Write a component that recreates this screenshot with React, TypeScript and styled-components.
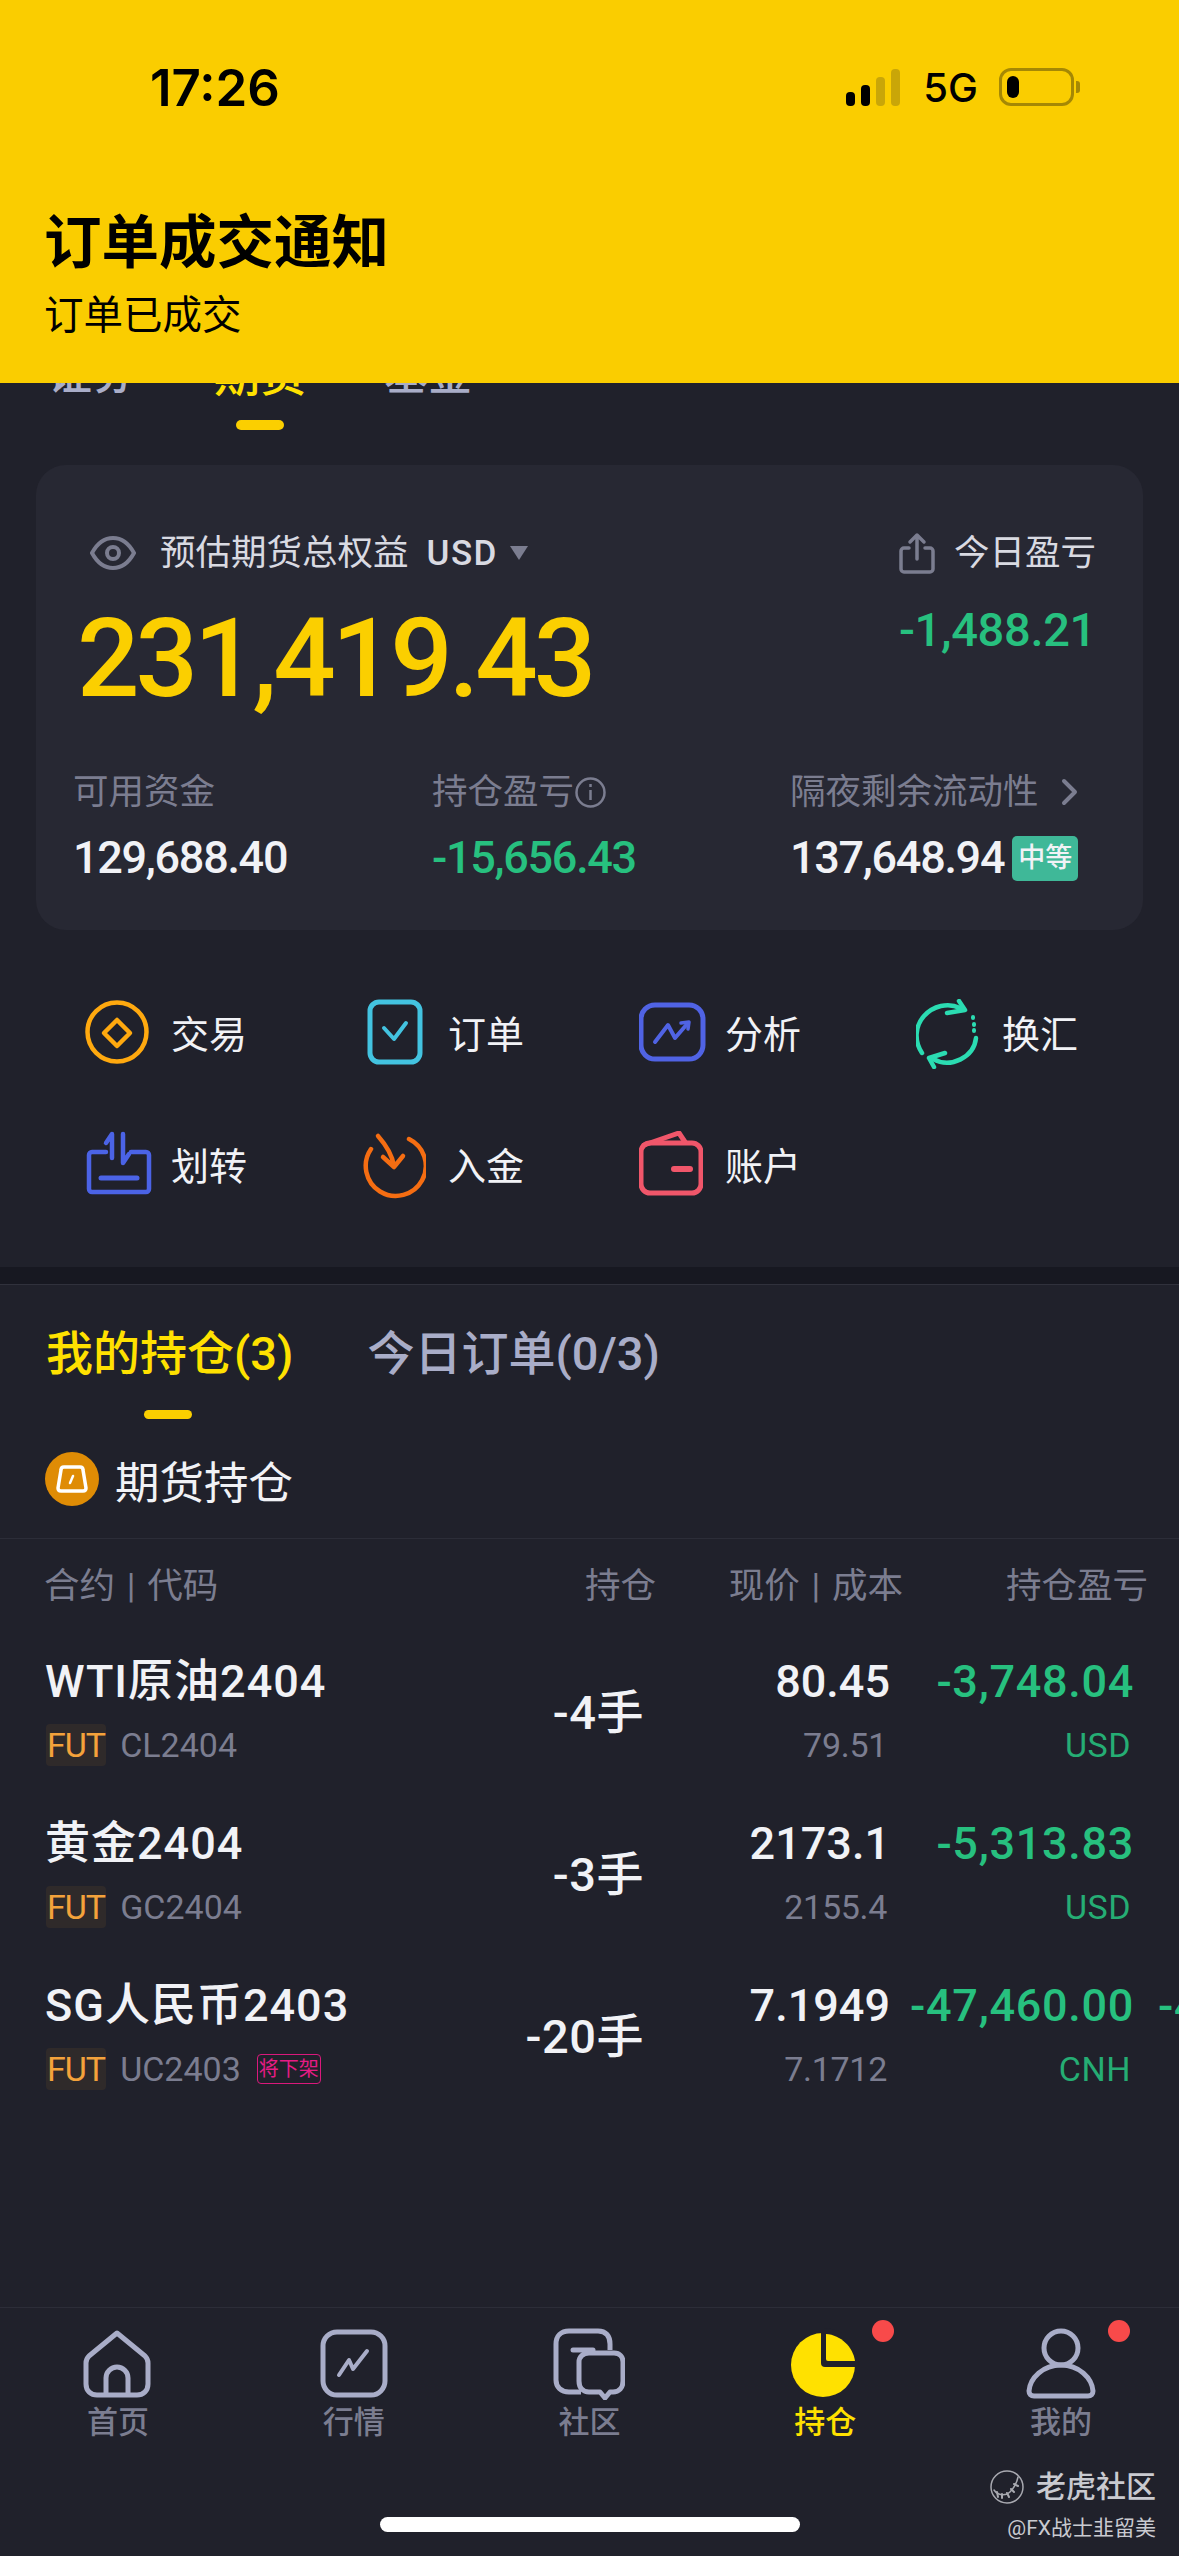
import React from "react";
import styled, { createGlobalStyle } from "styled-components";

const GREEN = "#27c07f";
const GREY = "#7b7d90";
const LILAC = "#a9adc8";
const WHITE = "#f1f2f6";

const GlobalStyle = createGlobalStyle`
  html, body {
    margin: 0;
    padding: 0;
    background: #20212b;
    font-family: Roboto, "Noto Sans CJK SC", sans-serif;
  }
`;

const holdings = [
	{ name: "WTI原油2404", code: "CL2404", qty: "-4手", price: "80.45", cost: "79.51", pnl: "-3,748.04", ccy: "USD" },
	{ name: "黄金2404", code: "GC2404", qty: "-3手", price: "2173.1", cost: "2155.4", pnl: "-5,313.83", ccy: "USD" },
	{ name: "SG人民币2403", code: "UC2403", qty: "-20手", price: "7.1949", cost: "7.1712", pnl: "-47,460.00", ccy: "CNH", delisting: true, more: "-4" },
];

const Eye = () => (
	<svg width="46" height="36" viewBox="0 0 46 36" fill="none" stroke={GREY} strokeWidth="4">
		<path d="M2 18C8 7 15 3 23 3s15 4 21 15c-6 11-13 15-21 15S8 29 2 18Z" />
		<circle cx="23" cy="18" r="6" />
	</svg>
);

const Share = () => (
	<svg width="36" height="42" viewBox="0 0 36 42" fill="none" stroke={GREY} strokeWidth="3.5" strokeLinecap="round" strokeLinejoin="round">
		<path d="M10 16H5a3 3 0 0 0-3 3v18a3 3 0 0 0 3 3h26a3 3 0 0 0 3-3V19a3 3 0 0 0-3-3h-5" />
		<path d="M18 27V3M11 10l7-7 7 7" />
	</svg>
);

const Info = () => (
	<svg width="33" height="33" viewBox="0 0 33 33" fill="none" stroke={GREY} strokeWidth="2.5">
		<circle cx="16.5" cy="16.5" r="14" />
		<path d="M16.5 14v10M16.5 8v3" />
	</svg>
);

const Chevron = () => (
	<svg width="20" height="30" viewBox="0 0 20 30" fill="none" stroke={GREY} strokeWidth="4" strokeLinecap="round" strokeLinejoin="round">
		<path d="M4 4l11 11L4 26" />
	</svg>
);

const TradeIcon = () => (
	<svg width="64" height="70" viewBox="0 0 64 70" fill="none" stroke="#ffa90f" strokeWidth="4.5" strokeLinejoin="round">
		<circle cx="32" cy="33" r="29.5" />
		<path d="M32 21l13 13-13 13-13-13Z" />
	</svg>
);

const OrderIcon = () => (
	<svg width="64" height="70" viewBox="0 0 64 70" fill="none" stroke="#43c3e0" strokeWidth="5" strokeLinecap="round" strokeLinejoin="round">
		<rect x="8" y="3" width="50" height="60" rx="9" />
		<path d="M22 29l10 11 12-16" strokeWidth="4" />
	</svg>
);

const AnalysisIcon = () => (
	<svg width="67" height="70" viewBox="0 0 67 70" fill="none" stroke="#5063e4" strokeWidth="5" strokeLinecap="round" strokeLinejoin="round">
		<rect x="2" y="6" width="62" height="54" rx="14" />
		<path d="M16 43l13-17 7 13 13-15" strokeWidth="4" />
		<path d="M42 24l8-1-1 7" strokeWidth="3.5" />
	</svg>
);

const ExchangeIcon = () => (
	<svg width="64" height="70" viewBox="0 0 64 70" fill="none" stroke="#2bdcb2" strokeWidth="4.5" strokeLinecap="round" strokeLinejoin="round">
		<path d="M6 54C-2 42-1 27 8 17 17 7 32 3 44 9" />
		<path d="M43 2l6 9-18 3" />
		<path d="M60 39C58 58 35 70 17 60" />
		<path d="M29 54L13 59l5 9" />
		<path d="M57 18v1M58 25v1M58 31v1" strokeWidth="4" />
	</svg>
);

const TransferIcon = () => (
	<svg width="67" height="70" viewBox="0 0 67 70" fill="none" stroke="#4b63e6" strokeWidth="4.5" strokeLinecap="round" strokeLinejoin="round">
		<path d="M21 21H7a3 3 0 0 0-3 3v34a3 3 0 0 0 3 3h54a3 3 0 0 0 3-3V24a3 3 0 0 0-3-3H46" />
		<path d="M16 47h36" strokeWidth="5" />
		<path d="M27 27V3l-6 9M38 3v29l6-9" />
	</svg>
);

const DepositIcon = () => (
	<svg width="64" height="70" viewBox="0 0 64 70" fill="none" stroke="#f56d12" strokeWidth="4.5" strokeLinecap="round" strokeLinejoin="round">
		<path d="M47 8A30 30 0 1 1 9 18" />
		<path d="M16 5c8 9 14 18 16 30M21 26l11 10 9-11" />
	</svg>
);

const WalletIcon = () => (
	<svg width="64" height="70" viewBox="0 0 64 70" fill="none" stroke="#f0566a" strokeWidth="5" strokeLinecap="round" strokeLinejoin="round">
		<rect x="2" y="12" width="60" height="50" rx="9" />
		<path d="M5 14L40 2l6 9" />
		<path d="M35 38h16" strokeWidth="6" />
	</svg>
);

const HomeIcon = () => (
	<svg width="70" height="72" viewBox="0 0 70 72" fill="none" stroke={LILAC} strokeWidth="5" strokeLinejoin="round">
		<path d="M34 5L6 28c-2 2-3 4-3 7v21c0 7 5 11 11 11h40c6 0 11-4 11-11V35c0-3-1-5-3-7Z" />
		<path d="M23 67V50c0-6 5-11 11-11s11 5 11 11v17" />
	</svg>
);

const MarketIcon = () => (
	<svg width="70" height="72" viewBox="0 0 70 72" fill="none" stroke={LILAC} strokeWidth="5" strokeLinecap="round" strokeLinejoin="round">
		<rect x="4" y="4" width="62" height="63" rx="14" />
		<path d="M20 47l10-15 4 9 14-18" strokeWidth="4" />
	</svg>
);

const CommunityIcon = () => (
	<svg width="72" height="72" viewBox="0 0 72 72" fill="none" stroke={LILAC} strokeWidth="5" strokeLinejoin="round">
		<path d="M28 64H16C8 64 3 59 3 52V16C3 8 8 3 16 3h29c8 0 12 5 12 13v6" />
		<path d="M20 22h20" strokeLinecap="round" />
		<path d="M36 25h25c6 0 9 4 9 9v19c0 7-4 11-10 11h-3l-5 6-5-6H36c-6 0-10-4-10-11V34c0-5 4-9 10-9Z" />
	</svg>
);

const PieIcon = () => (
	<svg width="70" height="72" viewBox="0 0 70 72" fill="none">
		<circle cx="33" cy="37" r="32" fill="#ffe100" />
		<path d="M31 0h3c19 0 35 16 35 39H35a4 4 0 0 1-4-4Z" fill="#20212b" />
		<path d="M36 6c15 1 27 13 29 27H38a2 2 0 0 1-2-2Z" fill="#ffe100" />
	</svg>
);

const MeIcon = () => (
	<svg width="70" height="72" viewBox="0 0 70 72" fill="none" stroke={LILAC} strokeWidth="5" strokeLinejoin="round">
		<circle cx="35" cy="20" r="17" />
		<path d="M35 37C17 37 4 50 3 63c0 3 2 5 5 5h54c3 0 5-2 5-5-1-13-14-26-32-26Z" />
	</svg>
);

const TigerIcon = () => (
	<svg width="36" height="34" viewBox="0 0 36 34" fill="none" stroke="#a8a9b0" strokeWidth="1.5" strokeLinecap="round">
		<circle cx="18" cy="17" r="16" />
		<path d="M5 20c4 6 12 6 16 2 4-4 7-10 8-15" />
		<path d="M8 22l1 5M13 24l0 4M18 23l2 4M22 19l3 3M25 14l4 2" strokeWidth="2" />
	</svg>
);

const actions = [
	{ label: "交易", icon: <TradeIcon /> },
	{ label: "订单", icon: <OrderIcon /> },
	{ label: "分析", icon: <AnalysisIcon /> },
	{ label: "换汇", icon: <ExchangeIcon /> },
	{ label: "划转", icon: <TransferIcon /> },
	{ label: "入金", icon: <DepositIcon /> },
	{ label: "账户", icon: <WalletIcon /> },
];

const navItems = [
	{ label: "首页", icon: <HomeIcon /> },
	{ label: "行情", icon: <MarketIcon /> },
	{ label: "社区", icon: <CommunityIcon /> },
	{ label: "持仓", icon: <PieIcon />, active: true, dot: true },
	{ label: "我的", icon: <MeIcon />, dot: true },
];

export default function App() {
	return (
		<>
			<GlobalStyle />
			<Page>
				<Banner>
					<StatusBar>
						<Time>17:26</Time>
						<StatusRight>
							<Signal>
								<Bar $h={14} />
								<Bar $h={21} />
								<Bar $h={29} $dim />
								<Bar $h={37} $dim />
							</Signal>
							<Network>5G</Network>
							<Battery>
								<BatteryLevel />
							</Battery>
							<BatteryCap />
						</StatusRight>
					</StatusBar>
					<BannerTitle>订单成交通知</BannerTitle>
					<BannerText>订单已成交</BannerText>
				</Banner>

				<AssetTabs>
					<AssetTab>证券</AssetTab>
					<AssetTab $active>
						期货
						<Indicator />
					</AssetTab>
					<AssetTab>基金</AssetTab>
				</AssetTabs>

				<Card>
					<CardHead>
						<HeadLeft>
							<Eye />
							<HeadLabel>预估期货总权益</HeadLabel>
							<HeadCcy>USD</HeadCcy>
							<Caret />
						</HeadLeft>
						<HeadRight>
							<Share />
							<HeadLabel>今日盈亏</HeadLabel>
						</HeadRight>
					</CardHead>
					<TotalRow>
						<Total>231,419.43</Total>
						<TodayPnl>-1,488.21</TodayPnl>
					</TotalRow>
					<Stats>
						<div>
							<StatLabel>可用资金</StatLabel>
							<StatValue>129,688.40</StatValue>
						</div>
						<div>
							<StatLabel>
								持仓盈亏
								<Info />
							</StatLabel>
							<StatValue $green>-15,656.43</StatValue>
						</div>
						<div>
							<StatLabel>
								隔夜剩余流动性
								<ChevronWrap>
									<Chevron />
								</ChevronWrap>
							</StatLabel>
							<StatValue>
								137,648.94
								<Level>中等</Level>
							</StatValue>
						</div>
					</Stats>
				</Card>

				<Actions>
					{actions.map((a) => (
						<Action key={a.label}>
							<ActionIcon>{a.icon}</ActionIcon>
							<ActionLabel>{a.label}</ActionLabel>
						</Action>
					))}
				</Actions>

				<Band />

				<SectionTabs>
					<SectionTab $active>
						我的持仓(3)
						<SectionIndicator />
					</SectionTab>
					<SectionTab>今日订单(0/3)</SectionTab>
				</SectionTabs>

				<GroupRow>
					<GroupBadge>
						<svg width="34" height="30" viewBox="0 0 34 30" fill="none" stroke="#fff" strokeWidth="3.5" strokeLinejoin="round">
							<path d="M9 3h16c2 0 3 1 3 3l3 18c0 2-1 3-3 3H6c-2 0-3-1-3-3L6 6c0-2 1-3 3-3Z" />
							<path d="M18 12l-3 7" strokeLinecap="round" strokeWidth="2.5" />
						</svg>
					</GroupBadge>
					<GroupTitle>期货持仓</GroupTitle>
				</GroupRow>

				<TableHead>
					<span>合约 | 代码</span>
					<HeadCell>持仓</HeadCell>
					<HeadCell>现价 | 成本</HeadCell>
					<HeadCell>持仓盈亏</HeadCell>
				</TableHead>

				{holdings.map((h) => (
					<Row key={h.code}>
						<Cell>
							<Name>{h.name}</Name>
							<Sub>
								<FutTag>FUT</FutTag>
								<Code>{h.code}</Code>
								{h.delisting && <Delist>将下架</Delist>}
							</Sub>
						</Cell>
						<Qty>{h.qty}</Qty>
						<Cell $right>
							<Price>{h.price}</Price>
							<Sub>
								<Cost>{h.cost}</Cost>
							</Sub>
						</Cell>
						<Cell $right>
							<Pnl>{h.pnl}</Pnl>
							<Sub>
								<Ccy>{h.ccy}</Ccy>
							</Sub>
						</Cell>
						{h.more && (
							<Cell>
								<Pnl>{h.more}</Pnl>
							</Cell>
						)}
					</Row>
				))}

				<Nav>
					{navItems.map((n) => (
						<NavItem key={n.label} $active={n.active}>
							<NavIcon>
								{n.icon}
								{n.dot && <Dot />}
							</NavIcon>
							{n.label}
						</NavItem>
					))}
				</Nav>

				<Watermark>
					<Brand>
						<TigerIcon />
						老虎社区
					</Brand>
					<Author>@FX战士韭留美</Author>
				</Watermark>
				<HomeBar />
			</Page>
		</>
	);
}

const Page = styled.div`
  position: relative;
  display: flex;
  flex-direction: column;
  width: 1179px;
  height: 2556px;
  overflow: hidden;
  background: #20212b;
  color: ${WHITE};
`;

const Banner = styled.div`
  position: absolute;
  top: 0;
  left: 0;
  right: 0;
  z-index: 2;
  box-sizing: border-box;
  height: 383px;
  padding: 0 44px;
  background: #facd00;
  color: #000;
`;

const StatusBar = styled.div`
  display: flex;
  justify-content: space-between;
  align-items: center;
  height: 70px;
  padding: 52px 0 0 106px;
`;

const Time = styled.span`
  font-family: Inter, sans-serif;
  font-weight: 600;
  font-size: 51px;
`;

const StatusRight = styled.div`
  display: flex;
  align-items: center;
  margin-right: 55px;
`;

const Signal = styled.div`
  display: flex;
  align-items: flex-end;
  gap: 6px;
  height: 37px;
  margin-right: 23px;
`;

const Bar = styled.i<{ $h: number; $dim?: boolean }>`
  width: 9px;
  height: ${(p) => p.$h}px;
  border-radius: 4px;
  background: ${(p) => (p.$dim ? "#c9a608" : "#000")};
`;

const Network = styled.span`
  font-family: Inter, sans-serif;
  font-weight: 500;
  font-size: 40px;
  margin-right: 21px;
`;

const Battery = styled.div`
  box-sizing: border-box;
  width: 75px;
  height: 38px;
  padding: 5px;
  border: 3px solid #a58804;
  border-radius: 12px;
`;

const BatteryLevel = styled.div`
  width: 12px;
  height: 100%;
  border-radius: 6px;
  background: #000;
`;

const BatteryCap = styled.i`
  width: 4px;
  height: 12px;
  margin-left: 2px;
  border-radius: 0 3px 3px 0;
  background: #a58804;
`;

const BannerTitle = styled.div`
  margin-top: 82px;
  font-size: 57.5px;
  line-height: 80px;
  font-weight: 700;
`;

const BannerText = styled.div`
  margin-top: 7px;
  font-size: 39.5px;
  line-height: 50px;
`;

const AssetTabs = styled.div`
  display: flex;
  height: 430px;
  box-sizing: border-box;
  padding: 345px 0 0 48px;
  gap: 78px;
`;

const AssetTab = styled.div<{ $active?: boolean }>`
  position: relative;
  font-size: ${(p) => (p.$active ? 46 : 44)}px;
  line-height: 60px;
  font-weight: 500;
  color: ${(p) => (p.$active ? "#ffe100" : LILAC)};
`;

const Indicator = styled.i`
  position: absolute;
  top: 75px;
  left: 22px;
  width: 48px;
  height: 10px;
  border-radius: 5px;
  background: #fbcf00;
`;

const Card = styled.section`
  box-sizing: border-box;
  height: 465px;
  margin: 35px 36px 0;
  padding: 63px 47px 0 37px;
  border-radius: 30px;
  background: #272833;
`;

const CardHead = styled.div`
  display: flex;
  justify-content: space-between;
  height: 50px;
`;

const HeadLeft = styled.div`
  display: flex;
  align-items: center;
  padding-left: 17px;
`;

const HeadRight = styled.div`
  display: flex;
  align-items: center;
  gap: 19px;
`;

const HeadLabel = styled.span`
  margin-left: 0;
  font-size: 35.5px;
  line-height: 50px;
  color: #d9dae2;
  ${HeadLeft} & {
    margin-left: 24px;
  }
`;

const HeadCcy = styled.span`
  margin-left: 18px;
  font-size: 35px;
  font-weight: 500;
  letter-spacing: 1.5px;
  color: #d9dae2;
`;

const Caret = styled.i`
  width: 0;
  height: 0;
  margin-left: 12px;
  border-left: 9px solid transparent;
  border-right: 9px solid transparent;
  border-top: 14px solid ${GREY};
`;

const TotalRow = styled.div`
  display: flex;
  justify-content: space-between;
  align-items: flex-start;
  margin-top: 21px;
  padding-left: 4px;
`;

const Total = styled.div`
  font-size: 110px;
  line-height: 120px;
  font-weight: 500;
  letter-spacing: -4px;
  color: #fbcf00;
`;

const TodayPnl = styled.div`
  margin-top: 1px;
  font-size: 47px;
  line-height: 60px;
  font-weight: 500;
  letter-spacing: -0.3px;
  color: ${GREEN};
`;

const Stats = styled.div`
  display: grid;
  grid-template-columns: 359px 358px auto;
  margin-top: 48px;
`;

const StatLabel = styled.div`
  display: flex;
  align-items: center;
  font-size: 35.5px;
  line-height: 50px;
  color: ${GREY};
`;

const ChevronWrap = styled.span`
  display: flex;
  margin-left: 21px;
`;

const StatValue = styled.div<{ $green?: boolean }>`
  display: flex;
  align-items: center;
  margin-top: 11px;
  font-size: 45px;
  line-height: 60px;
  font-weight: 500;
  letter-spacing: -1.3px;
  color: ${(p) => (p.$green ? GREEN : WHITE)};
`;

const Level = styled.span`
  margin-left: 8px;
  padding: 0 6px;
  border-radius: 5px;
  background: #3fb898;
  font-size: 27px;
  line-height: 45px;
  letter-spacing: 0;
  color: #f1f2f6;
`;

const Actions = styled.div`
  display: grid;
  grid-template-columns: repeat(4, 277px);
  row-gap: 62px;
  padding: 69px 0 66px 85px;
`;

const Action = styled.div`
  display: flex;
  align-items: center;
  height: 70px;
`;

const ActionIcon = styled.span`
  display: flex;
  width: 86px;
`;

const ActionLabel = styled.span`
  margin-top: -6px;
  font-size: 38px;
  color: ${WHITE};
`;

const Band = styled.div`
  flex: none;
  height: 17px;
  background: #171821;
  border-bottom: 1px solid #30313c;
`;

const SectionTabs = styled.div`
  display: flex;
  gap: 74px;
  height: 95px;
  padding: 39px 0 0 46px;
`;

const SectionTab = styled.div<{ $active?: boolean }>`
  position: relative;
  font-size: 47px;
  line-height: 60px;
  font-weight: 500;
  color: ${(p) => (p.$active ? "#ffe100" : LILAC)};
`;

const SectionIndicator = styled.i`
  position: absolute;
  top: 86px;
  left: 98px;
  width: 48px;
  height: 9px;
  border-radius: 5px;
  background: #fbcf00;
`;

const GroupRow = styled.div`
  display: flex;
  align-items: center;
  gap: 16px;
  height: 54px;
  padding: 33px 0 32px 45px;
  border-bottom: 1px solid #2c2d38;
`;

const GroupBadge = styled.span`
  display: flex;
  align-items: center;
  justify-content: center;
  width: 54px;
  height: 54px;
  border-radius: 50%;
  background: #df8c05;
`;

const GroupTitle = styled.span`
  font-size: 44.5px;
`;

const TableHead = styled.div`
  display: grid;
  grid-template-columns: 374px 238px 247px 245px;
  align-items: center;
  box-sizing: border-box;
  height: 93px;
  padding: 0 0 6px 44px;
  font-size: 35.5px;
  word-spacing: 3px;
  color: ${GREY};
`;

const HeadCell = styled.span`
  text-align: right;
  white-space: nowrap;
`;

const Row = styled.div`
  display: grid;
  grid-template-columns: 362px 238px 246px 244px auto;
  height: 162px;
  flex: none;
  padding-left: 44px;
  white-space: nowrap;
`;

const Cell = styled.div<{ $right?: boolean }>`
  display: flex;
  flex-direction: column;
  align-items: ${(p) => (p.$right ? "flex-end" : "flex-start")};
  padding-top: 22px;
  padding-left: ${(p) => (p.$right ? 0 : 2)}px;
`;

const Name = styled.div`
  margin-left: -1px;
  font-size: 45px;
  line-height: 56px;
  font-weight: 500;
  letter-spacing: 1px;
`;

const Price = styled.div`
  font-size: 45px;
  line-height: 56px;
  font-weight: 500;
`;

const Pnl = styled.div`
  font-size: 45px;
  line-height: 56px;
  font-weight: 500;
  letter-spacing: 0.7px;
  color: ${GREEN};
  ${Row} > ${Cell}:last-child:nth-child(5) & {
    margin-left: 22px;
  }
`;

const Sub = styled.div`
  display: flex;
  align-items: center;
  gap: 14px;
  height: 42px;
  margin-top: 14px;
`;

const FutTag = styled.span`
  padding: 0 1px;
  border-radius: 4px;
  background: #2f2a2a;
  font-size: 34px;
  line-height: 42px;
  letter-spacing: -1px;
  color: #f4a23b;
`;

const Code = styled.span`
  font-size: 34px;
  color: ${GREY};
`;

const Cost = styled(Code)`
  margin-right: 3px;
  letter-spacing: -0.3px;
`;

const Delist = styled.span`
  margin-left: 2px;
  padding: 0 1px;
  border: 1.5px solid #d9197c;
  border-radius: 4px;
  font-size: 20px;
  line-height: 28px;
  color: #e61c85;
`;

const Ccy = styled.span`
  margin-right: 3px;
  font-size: 34px;
  letter-spacing: 0.5px;
  color: #25ad74;
`;

const Qty = styled.div`
  align-self: center;
  padding-bottom: 9px;
  text-align: right;
  font-size: 47px;
  font-weight: 500;
  letter-spacing: 0.5px;
`;

const Nav = styled.nav`
  display: grid;
  grid-template-columns: repeat(5, 1fr);
  flex: none;
  box-sizing: border-box;
  height: 249px;
  margin-top: auto;
  padding-top: 20px;
  border-top: 1px solid #2c2d38;
`;

const NavItem = styled.div<{ $active?: boolean }>`
  display: flex;
  flex-direction: column;
  align-items: center;
  font-size: 31px;
  line-height: 40px;
  font-weight: 500;
  color: ${(p) => (p.$active ? "#ffe100" : GREY)};
`;

const NavIcon = styled.div`
  position: relative;
  display: flex;
  justify-content: center;
  width: 72px;
  height: 72px;
  margin-bottom: 3px;
`;

const Dot = styled.i`
  position: absolute;
  top: -8px;
  left: 83px;
  width: 22px;
  height: 22px;
  border-radius: 50%;
  background: #f84a4a;
`;

const Watermark = styled.div`
  position: absolute;
  right: 23px;
  bottom: 13px;
  display: flex;
  flex-direction: column;
  align-items: flex-end;
  gap: 4px;
  color: #c9cad0;
`;

const Brand = styled.div`
  display: flex;
  align-items: center;
  gap: 11px;
  font-size: 30px;
  line-height: 44px;
  font-weight: 500;
`;

const Author = styled.div`
  font-size: 21px;
  line-height: 30px;
`;

const HomeBar = styled.i`
  position: absolute;
  left: 380px;
  bottom: 24px;
  width: 420px;
  height: 15px;
  border-radius: 8px;
  background: #fff;
`;
